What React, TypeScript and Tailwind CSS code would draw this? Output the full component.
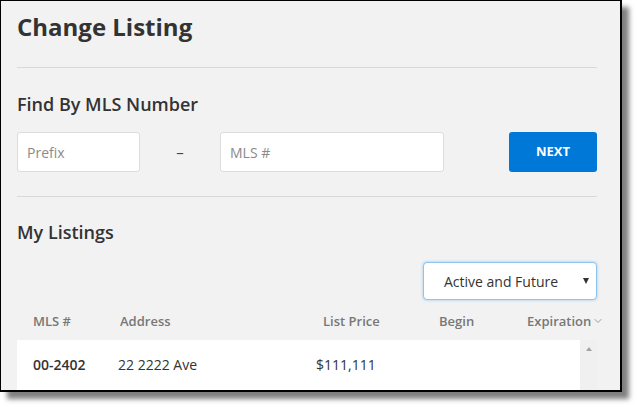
import { ChevronDown } from "lucide-react";

export default function App() {
  return (
    <div className="w-[637px] h-[407px] bg-white font-['Open_Sans',sans-serif] text-[#333]">
      <div className="w-[622px] h-[392px] border-t border-l border-r-2 border-b-2 border-black bg-[#f2f2f2] shadow-[7px_7px_5px_rgba(0,0,0,0.5)] overflow-hidden pl-4 pr-[23px] pt-[10px]">
        <h1 className="text-[24px] leading-[32px] font-bold">Change Listing</h1>
        <div className="mt-[24px] h-px bg-[#d9d9d9]" />

        <h2 className="mt-[22px] text-[18px] leading-[28px] font-semibold">Find By MLS Number</h2>
        <div className="mt-[14px] flex items-center">
          <input
            placeholder="Prefix"
            className="w-[123px] h-[40px] rounded-[3px] border border-[#dcdcdc] bg-white px-[9px] text-[14px] placeholder:text-[#8a8a8a] outline-none"
          />
          <div className="w-[80px] text-center text-[15px] text-[#444]">–</div>
          <input
            placeholder="MLS #"
            className="w-[224px] h-[40px] rounded-[3px] border border-[#dcdcdc] bg-white px-[9px] text-[14px] placeholder:text-[#8a8a8a] outline-none"
          />
          <button className="ml-auto w-[88px] h-[40px] rounded-[3px] bg-[#0078d7] text-white text-[13px] font-bold">
            NEXT
          </button>
        </div>
        <div className="mt-[24px] h-px bg-[#d9d9d9]" />

        <h2 className="mt-[23px] text-[18px] leading-[24px] font-semibold">My Listings</h2>
        <div className="mt-[18px] flex justify-end">
          <div className="relative w-[174px] h-[38px] rounded-[4px] border border-[#8cc4f2] bg-white shadow-[0_0_3px_rgba(0,120,215,0.35)] flex items-center justify-center pr-[18px] text-[14px]">
            Active and Future
            <span className="absolute right-[7px] top-[15px] w-0 h-0 border-l-[3.5px] border-r-[3.5px] border-t-[6px] border-l-transparent border-r-transparent border-t-[#333]" />
          </div>
        </div>

        <div className="mt-[11px] grid grid-cols-[87px_203px_116px_88px_1fr] pl-4 text-[13px] leading-[20px] font-semibold text-[#777]">
          <div>MLS #</div>
          <div>Address</div>
          <div>List Price</div>
          <div>Begin</div>
          <div className="flex items-center whitespace-nowrap">
            Expiration
            <ChevronDown className="ml-[1px] h-[12px] w-[12px] text-[#666]" strokeWidth={1.25} />
          </div>
        </div>

        <div className="mt-[9px] flex">
          <div className="flex-1 bg-white pl-4 pt-[15px] h-[60px] grid grid-cols-[85px_198px_1fr] text-[14px] leading-[20px]">
            <div className="font-semibold">00-2402</div>
            <div>22 2222 Ave</div>
            <div>$111,111</div>
          </div>
          <div className="w-[17px] bg-[#f0f0f0] flex justify-center pt-[7px]">
            <span className="w-0 h-0 border-l-[3.5px] border-r-[3.5px] border-b-[4px] border-l-transparent border-r-transparent border-b-[#a3a3a3]" />
          </div>
        </div>
      </div>
    </div>
  );
}
